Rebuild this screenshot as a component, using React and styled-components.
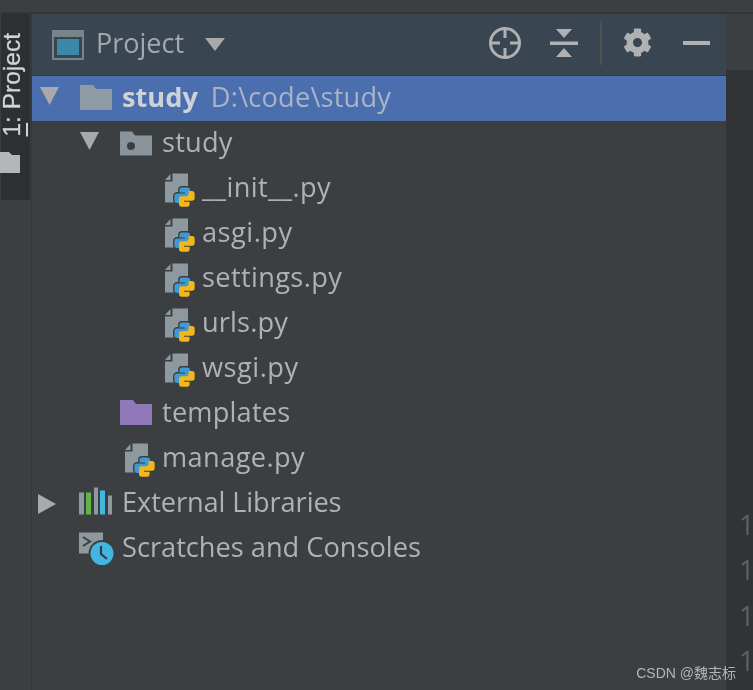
import React from 'react';
import styled, { createGlobalStyle } from 'styled-components';
import { FaCog } from 'react-icons/fa';

const Global = createGlobalStyle`
  html, body { margin: 0; padding: 0; background: #3c3f41; }
  body { font-family: "Open Sans", "Noto Sans", sans-serif; }
`;

const Frame = styled.div`
  position: relative;
  width: 753px;
  height: 690px;
  overflow: hidden;
  display: flex;
  flex-direction: column;
  background: #3c3f41;
  filter: blur(0.45px);
`;
const TitleStrip = styled.div`
  height: 12px;
  flex: none;
  background: #3c3f41;
  border-bottom: 2px solid #333537;
`;
const Body = styled.div`
  flex: 1;
  min-height: 0;
  display: grid;
  grid-template-columns: 32px 694px 27px;
`;
const SideBar = styled.aside`
  background: #3c3f41;
  border-right: 1px solid #333537;
  box-sizing: border-box;
  padding-left: 1px;
`;
const SideTab = styled.div`
  width: 29px;
  height: 186px;
  box-sizing: border-box;
  background: #2d2f31;
  color: #d2d4d5;
  display: flex;
  flex-direction: column;
  padding-top: 19px;
`;
const SideLabel = styled.div`
  writing-mode: vertical-rl;
  transform: rotate(180deg);
  font-family: "Liberation Sans", sans-serif;
  font-size: 24.500px;
  line-height: 22px;
  width: 22px;
  flex: none;
  white-space: nowrap;
  -webkit-text-stroke: 0.3px #d2d4d5;
  u { text-underline-offset: 2px; }
`;
const SideFolder = styled.svg`
  display: block;
  margin: 14px 0 0 -1px;
  width: 22px;
  height: 22px;
  flex: none;
`;
const Panel = styled.main`
  min-width: 0;
  display: flex;
  flex-direction: column;
`;
const Header = styled.header`
  height: 61px;
  flex: none;
  background: #3a4552;
  display: flex;
  align-items: center;
  padding: 0 16px 0 20px;
  color: #a3a8ad;
`;
const HeaderTitle = styled.span`
  font-size: 27px;
  margin: 0 0 4px 12px;
  line-height: 1;
`;
const Spacer = styled.div` flex: 1; `;
const HeaderTools = styled.div`
  display: flex;
  align-items: center;
  padding-bottom: 4px;
`;
const HeaderIcon = styled.svg`
  display: block;
  flex: none;
  margin-left: ${p => p.$ml || 0}px;
`;
const Separator = styled.div`
  width: 2px;
  height: 44px;
  background: #4d5150;
  margin-left: 22px;
`;
const GearIcon = styled(FaCog)`
  display: block;
  flex: none;
  color: #afb1b3;
  margin-left: 21px;
`;
const Tree = styled.div`
  flex: 1;
  border-top: 1px solid #33373b;
`;
const Row = styled.div`
  height: 45px;
  box-sizing: border-box;
  display: flex;
  align-items: center;
  padding-left: ${p => 6 + p.$level * 40}px;
  background: ${p => (p.$selected ? '#4b6eaf' : 'transparent')};
  color: #aeb2b5;
  font-size: 27.2px;
  white-space: nowrap;
`;
const ArrowSlot = styled.div`
  width: 42px;
  flex: none;
  display: flex;
  align-items: center;
  margin-bottom: 6px;
`;
const IconSlot = styled.div`
  width: 42px;
  flex: none;
  display: flex;
  align-items: center;
`;
const Label = styled.span`
  font-weight: ${p => (p.$bold ? 700 : 400)};
  color: ${p => (p.$selected ? '#cdd2d8' : 'inherit')};
  letter-spacing: ${p => p.$track || 0}px;
  margin-bottom: 4px;
`;
const Hint = styled.span`
  color: #a9b4c6;
  letter-spacing: 0.2px;
  margin: 0 0 4px 13px;
`;
const Gutter = styled.aside`
  background: #313335;
  overflow: hidden;
  display: flex;
  flex-direction: column;
`;
const GutterTab = styled.div`
  height: 56px;
  flex: none;
  background: #3c3f41;
  margin-bottom: 432px;
`;
const LineNo = styled.div`
  height: 45.4px;
  flex: none;
  padding-left: 13px;
  color: #5e6265;
  font-size: 27px;
  line-height: 45px;
`;
const Watermark = styled.div`
  position: absolute;
  right: 17px;
  bottom: 8px;
  color: #b5b5b5;
  font-size: 14px;
  line-height: 18px;
  font-family: "Liberation Sans", "Noto Sans CJK SC", sans-serif;
`;
const TreeSvg = styled.svg`
  display: block;
  flex: none;
  overflow: visible;
  margin-left: ${p => p.$ml || 0}px;
`;

const Arrow = ({ open }) => (
  <TreeSvg width="24" height="24" viewBox="0 0 24 24">
    {open ? <path d="M2 3h19L11.500 21z" fill="#a7a9ab" /> : <path d="M0 5l18 10L0 25z" fill="#a7a9ab" />}
  </TreeSvg>
);

const FolderPlain = ({ color = '#8e9ba6' }) => (
  <TreeSvg width="34" height="28" viewBox="0 0 34 28">
    <path d="M0 0h13l3 4h16v21H0z" fill={color} />
  </TreeSvg>
);

const FolderPackage = () => (
  <TreeSvg width="34" height="28" viewBox="0 0 34 28">
    <path d="M0 1.500h12l3 4h17v20H0z" fill="#8a949b" />
    <circle cx="11" cy="16" r="4" fill="#3c3f41" />
  </TreeSvg>
);

const PY_TOP = 'M8.500 1h6.500a3 3 0 0 1 3 3v6a2.500 2.500 0 0 1-2.500 2.500H10a2.500 2.500 0 0 0-2.500 2.500v3H4a3 3 0 0 1-3-3v-4.500a3 3 0 0 1 3-3h8.500V6.500H6.500V3.500a2.500 2.500 0 0 1 2-2.500z';

const PyIcon = () => (
  <TreeSvg $ml={4} width="36" height="36" viewBox="0 0 36 36">
    <path d="M8.500 2.500h15.500v29H1V10.500h7.500z" fill="#8e999f" />
    <path d="M6.500 3v6H1z" fill="#8e999f" />
    <g transform="translate(9.500 15.500) scale(0.92)">
      <path d={PY_TOP} fill="#3c3f41" stroke="#3c3f41" strokeWidth="3" />
      <path d={PY_TOP} fill="#3c3f41" stroke="#3c3f41" strokeWidth="3" transform="rotate(180 12 11.500)" />
      <path d={PY_TOP} fill="#3f99d2" />
      <path d={PY_TOP} fill="#f3b71c" transform="rotate(180 12 11.500)" />
    </g>
  </TreeSvg>
);

const LibIcon = () => (
  <TreeSvg $ml={-1} width="34" height="36" viewBox="0 0 34 36">
    <rect x="0" y="6.500" width="5" height="22" fill="#8f9aa0" />
    <rect x="7" y="6.500" width="5" height="22" fill="#62b543" />
    <rect x="15" y="1.500" width="4" height="27" fill="#8f9aa0" />
    <rect x="21" y="4.500" width="5" height="24" fill="#40b6e0" />
    <rect x="29" y="9.500" width="4" height="19" fill="#8f9aa0" />
  </TreeSvg>
);

const ScratchIcon = () => (
  <TreeSvg $ml={-1} width="36" height="36" viewBox="0 0 36 36">
    <path d="M0 1.500h24v21H0z" fill="#8e999f" />
    <path d="M4 6l7 4.500-7 4.500" fill="none" stroke="#3c3f41" strokeWidth="2" />
    <circle cx="23" cy="22.500" r="13.500" fill="#3c3f41" />
    <circle cx="23" cy="22.500" r="11.500" fill="#40b6e0" />
    <path d="M22 15v8l6 5" fill="none" stroke="#2f3f4a" strokeWidth="2.200" />
  </TreeSvg>
);

const rows = [
  { level: 2, icon: <PyIcon />, text: '__init__.py', track: 0.35 },
  { level: 2, icon: <PyIcon />, text: 'asgi.py', track: 0.5 },
  { level: 2, icon: <PyIcon />, text: 'settings.py', track: 0.35 },
  { level: 2, icon: <PyIcon />, text: 'urls.py', track: 0.15 },
  { level: 2, icon: <PyIcon />, text: 'wsgi.py', track: 0.5 },
  { level: 1, icon: <FolderPlain color="#8f79b8" />, text: 'templates', track: 0.2 },
  { level: 1, icon: <PyIcon />, text: 'manage.py', track: 0.4 },
];

export default function App() {
  return (
    <Frame>
      <Global />
      <TitleStrip />
      <Body>
        <SideBar>
          <SideTab>
            <SideLabel><u>1</u>: Project</SideLabel>
            <SideFolder viewBox="0 0 22 22">
              <path d="M-2 1h11l3 3h8v18H-2z" fill="#b4b6b8" />
            </SideFolder>
          </SideTab>
        </SideBar>
        <Panel>
          <Header>
            <svg width="32" height="30" viewBox="0 0 32 30" style={{ display: 'block', flex: 'none' }}>
              <rect x="1" y="1" width="30" height="28" fill="none" stroke="#76848c" strokeWidth="2" />
              <rect x="1" y="1" width="30" height="6" fill="#76848c" />
              <rect x="5" y="9" width="22" height="16" fill="#3a87a8" />
            </svg>
            <HeaderTitle>Project</HeaderTitle>
            <HeaderIcon $ml={21} width="20" height="13" viewBox="0 0 20 13">
              <path d="M0 0h20L10 13z" fill="#a7a9ab" />
            </HeaderIcon>
            <Spacer />
            <HeaderTools>
              <HeaderIcon width="34" height="34" viewBox="0 0 34 34">
                <circle cx="17" cy="17" r="14.500" fill="none" stroke="#afb1b3" strokeWidth="3" />
                <path d="M17 3v9M17 22v9M3 17h9M22 17h9" stroke="#afb1b3" strokeWidth="3" />
              </HeaderIcon>
              <HeaderIcon $ml={28} width="28" height="30" viewBox="0 0 28 30">
                <path d="M6 1h16l-8 9zM14 20l8 9H6zM0 13.500h28v3.500H0z" fill="#afb1b3" />
              </HeaderIcon>
              <Separator />
              <GearIcon size={29} />
              <HeaderIcon $ml={31} width="27" height="4" viewBox="0 0 27 4">
                <rect width="27" height="4" fill="#afb1b3" />
              </HeaderIcon>
            </HeaderTools>
          </Header>
          <Tree>
            <Row $level={0} $selected>
              <ArrowSlot><Arrow open /></ArrowSlot>
              <IconSlot><FolderPlain /></IconSlot>
              <Label $bold $selected>study</Label>
              <Hint>D:\code\study</Hint>
            </Row>
            <Row $level={1}>
              <ArrowSlot><Arrow open /></ArrowSlot>
              <IconSlot><FolderPackage /></IconSlot>
              <Label $track={0.2}>study</Label>
            </Row>
            {rows.map(r => (
              <Row key={r.text} $level={r.level}>
                <ArrowSlot />
                <IconSlot>{r.icon}</IconSlot>
                <Label $track={r.track}>{r.text}</Label>
              </Row>
            ))}
            <Row $level={0}>
              <ArrowSlot><Arrow /></ArrowSlot>
              <IconSlot><LibIcon /></IconSlot>
              <Label $track={-0.1}>External Libraries</Label>
            </Row>
            <Row $level={0}>
              <ArrowSlot />
              <IconSlot><ScratchIcon /></IconSlot>
              <Label>Scratches and Consoles</Label>
            </Row>
          </Tree>
        </Panel>
        <Gutter>
          <GutterTab />
          <LineNo>1</LineNo>
          <LineNo>1</LineNo>
          <LineNo>1</LineNo>
          <LineNo>1</LineNo>
        </Gutter>
      </Body>
      <Watermark>CSDN @魏志标</Watermark>
    </Frame>
  );
}
